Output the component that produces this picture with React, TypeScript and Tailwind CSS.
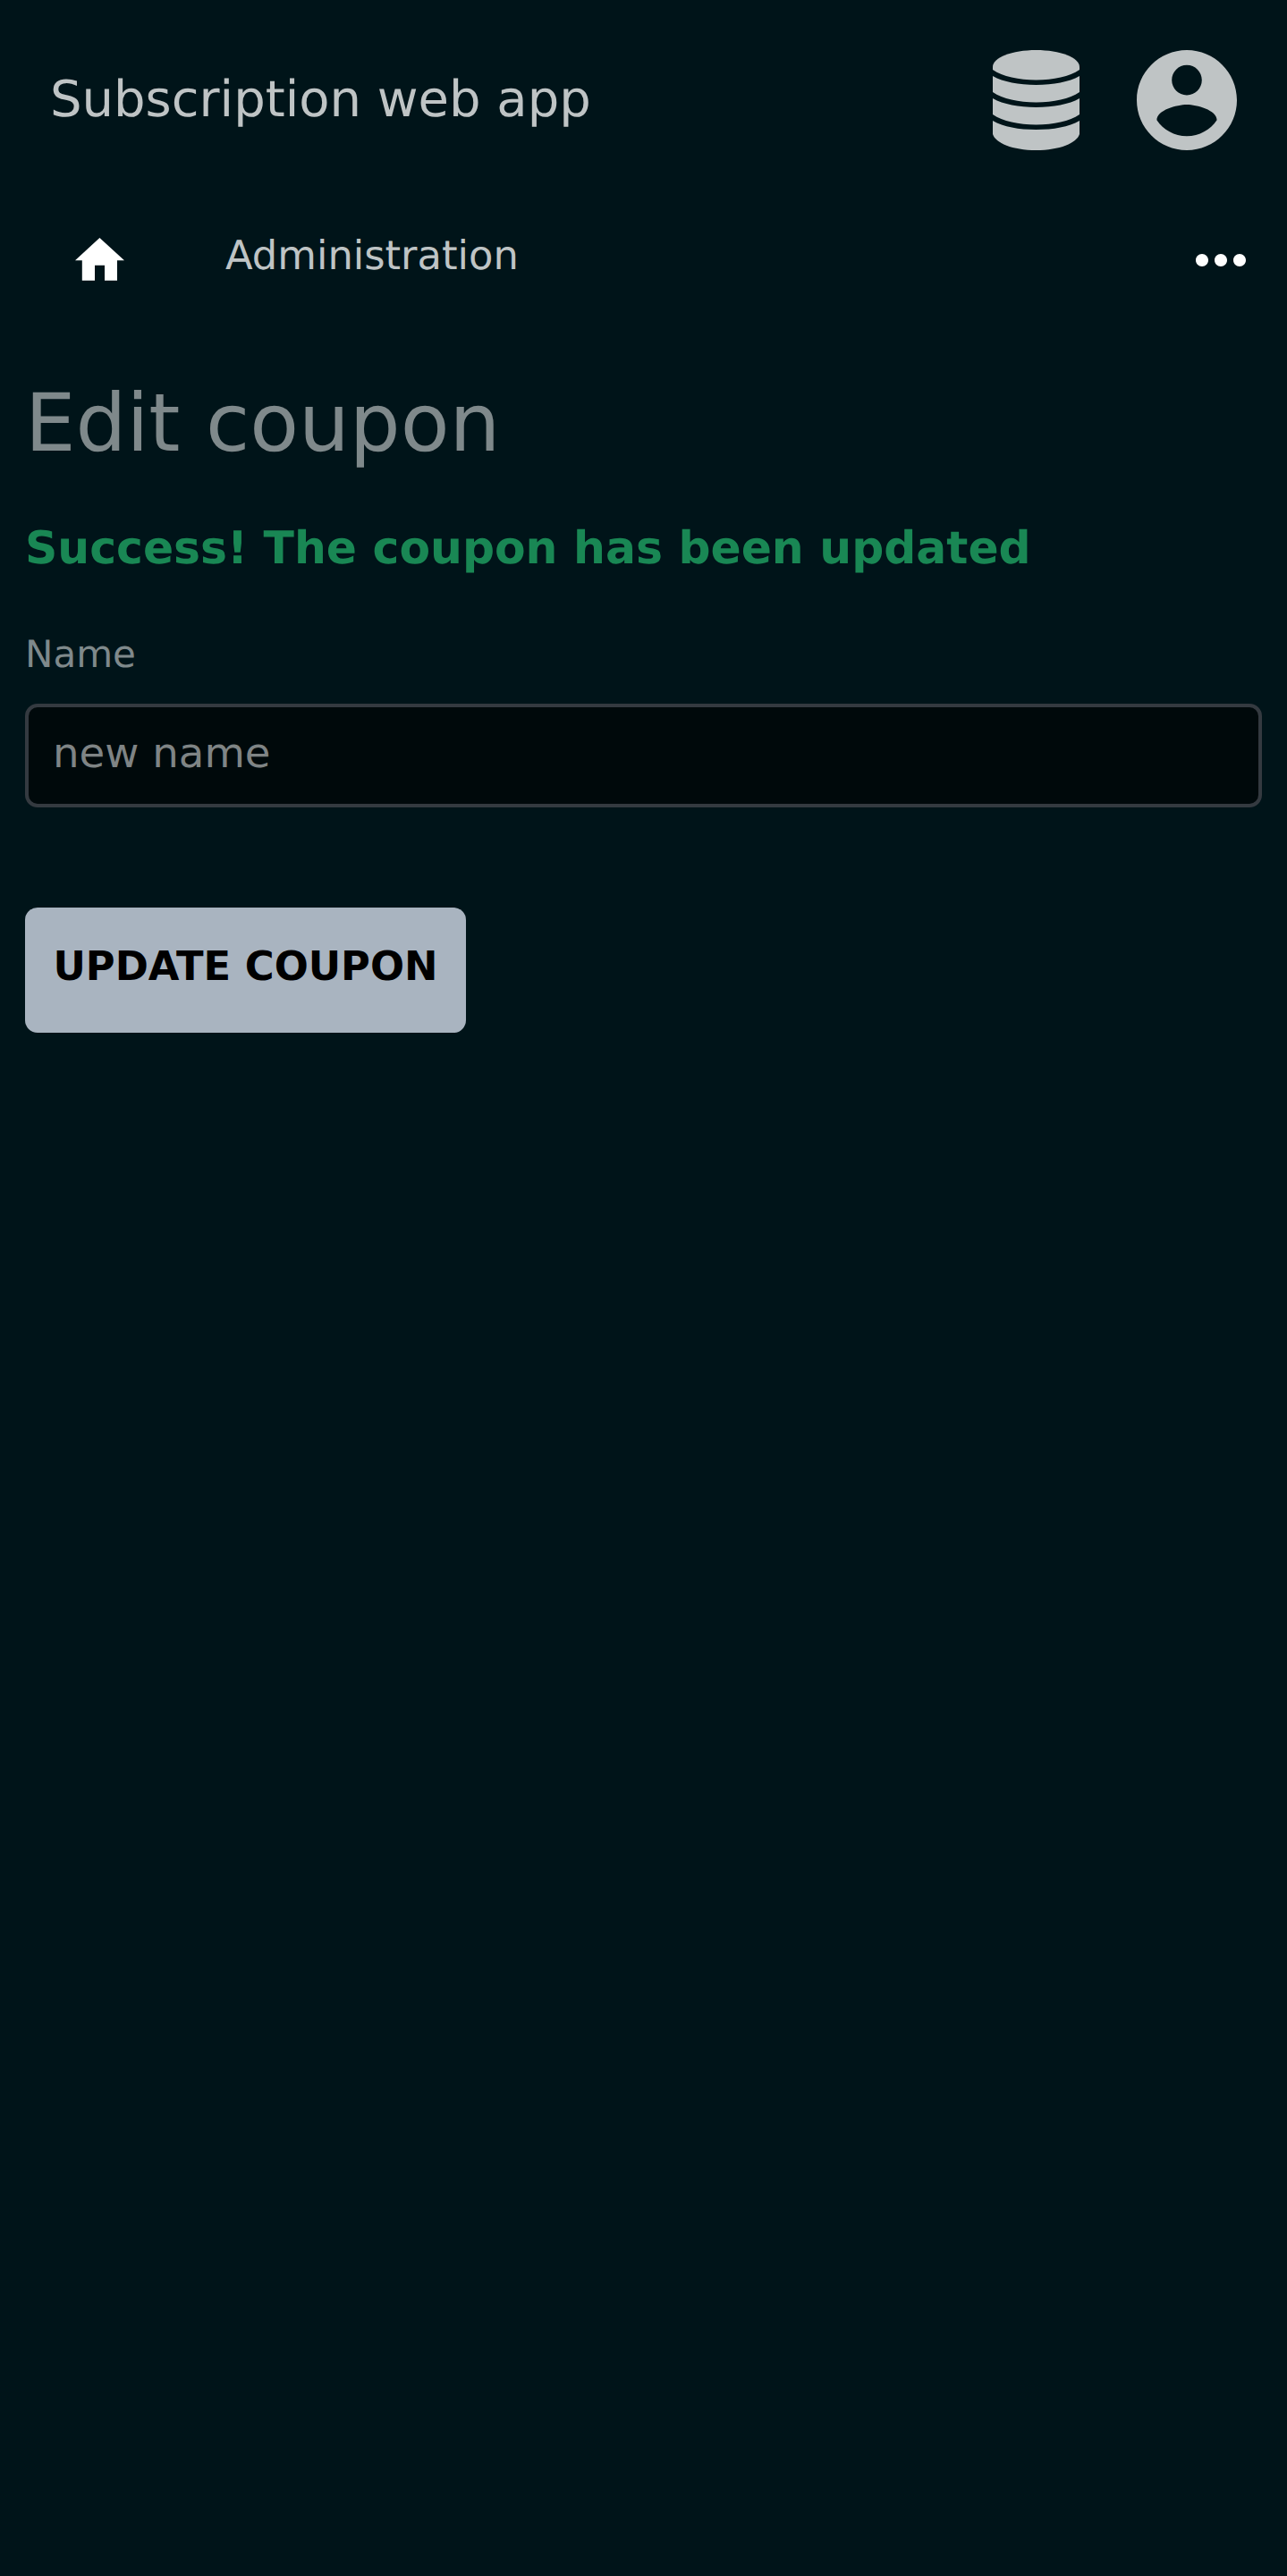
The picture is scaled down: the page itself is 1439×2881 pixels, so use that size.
import { MdMoreHoriz } from "react-icons/md";

function DatabaseIcon() {
  return (
    <svg viewBox="0 0 97 112" className="h-28 w-[97px]" fill="currentColor">
      <path d="M0 18.7C0 8.4 21.7 0 48.5 0S97 8.4 97 18.7V22C86 29.5 68 33.4 48.5 33.4S11 29.5 0 22Z" />
      <path d="M0 29C12 35.8 29 38.9 48.5 38.9S85 35.8 97 29V47C86 54.5 68 58.4 48.5 58.4S11 54.5 0 47Z" />
      <path d="M0 54C12 60.8 29 63.9 48.5 63.9S85 60.8 97 54V72C86 79.5 68 83.4 48.5 83.4S11 79.5 0 72Z" />
      <path d="M0 79C12 85.8 29 89 48.5 89S85 85.8 97 79V94C94 104 75 112 48.5 112S3 104 0 94Z" />
    </svg>
  );
}

function AccountIcon() {
  return (
    <svg viewBox="2 2 20 20" className="size-28" fill="currentColor">
      <path d="M12 2C6.48 2 2 6.48 2 12s4.48 10 10 10 10-4.48 10-10S17.52 2 12 2zm0 3c1.66 0 3 1.34 3 3s-1.34 3-3 3-3-1.34-3-3 1.34-3 3-3zm0 14.2c-2.5 0-4.71-1.28-6-3.22.03-1.99 4-3.08 6-3.08 1.99 0 5.97 1.09 6 3.08-1.29 1.94-3.5 3.22-6 3.22z" />
    </svg>
  );
}

function HomeIcon() {
  return (
    <svg viewBox="0 0 55 48" className="h-12 w-[55px]" fill="currentColor">
      <path d="M27.4 0 55 25.2H47V47.7H33V30.8H22V47.7H7.8V25.2H0Z" />
    </svg>
  );
}

export default function App() {
  return (
    <div className="min-h-[2881px] bg-[#001419] font-['DejaVu_Sans',sans-serif] [text-rendering:geometricPrecision]">
      <header className="flex h-[224px] items-center justify-between px-14">
        <h1 className="-mt-px text-[56px] leading-[84px] text-[#bfc4c5]">Subscription web app</h1>
        <div className="flex items-center gap-16 text-[#bfc4c5]">
          <DatabaseIcon />
          <AccountIcon />
        </div>
      </header>
      <nav className="flex h-[133px] items-center text-white">
        <a href="#" className="-mt-px ml-[84px]">
          <HomeIcon />
        </a>
        <a href="#" className="-mt-[10px] ml-[113px] text-[44.8px] leading-[68px] text-[#bfc4c5]">
          Administration
        </a>
        <MdMoreHoriz className="mr-8 ml-auto size-[84px]" />
      </nav>
      <main className="px-7">
        <h2 className="mt-[57px] text-[89.6px] leading-[120px] text-[#7f898b]">Edit coupon</h2>
        <p className="mt-[41px] text-[50.4px] leading-[75px] font-bold text-[#198754]">
          Success! The coupon has been updated
        </p>
        <label className="mt-[50px] block text-[42px] leading-[63px] text-[#7f898b]">Name</label>
        <input
          className="mt-6 block h-[116px] w-full rounded-[14px] border-4 border-[#343a40] bg-[#00090b] px-[27px] pb-[7px] text-[46.67px] text-[#7f8485]"
          defaultValue="new name"
        />
        <button className="mt-28 block h-[140px] w-[493px] rounded-[14px] bg-[#a9b4c0] pb-[9px] text-[44.8px] font-bold text-black">
          UPDATE COUPON
        </button>
      </main>
    </div>
  );
}
